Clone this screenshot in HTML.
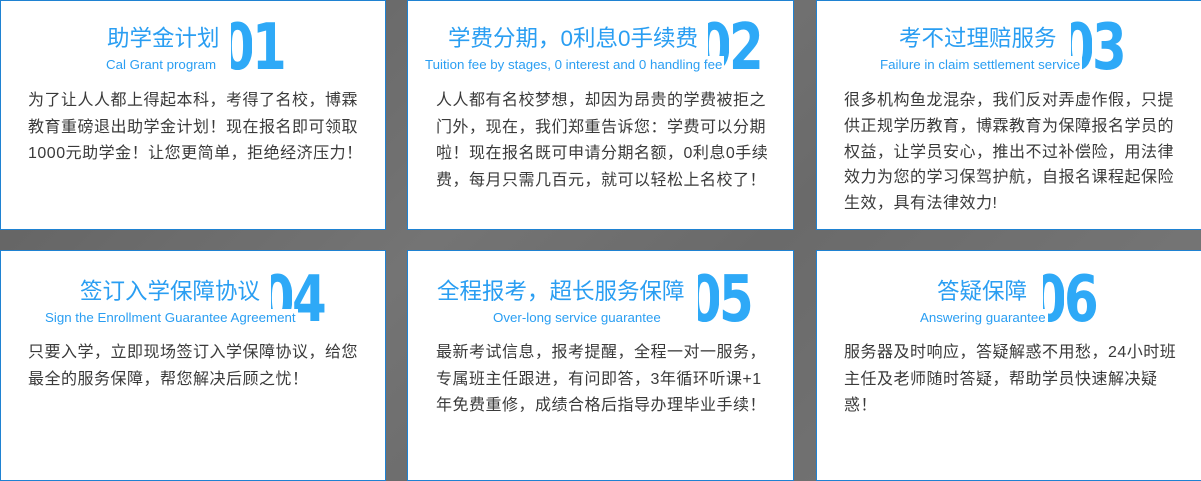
<!DOCTYPE html>
<html><head><meta charset="utf-8"><style>
*{margin:0;padding:0;box-sizing:border-box}
body{width:1201px;height:480px;overflow:hidden;position:relative;background:linear-gradient(135deg,#5e5e5e 0%,#747474 40%,#6a6a6a 60%,#7a7a7a 100%);font-family:"Liberation Sans","Noto Sans CJK SC",sans-serif}
.c{position:absolute;background:#fff;border:1px solid #1f82d2;overflow:hidden}
.t{position:absolute;top:23px;font-size:22.5px;color:#2a9ef2;white-space:nowrap;z-index:2;line-height:30px}
.s{position:absolute;top:55px;font-size:13.3px;color:#2a9ef2;white-space:nowrap;z-index:2;line-height:18px;background:#fff;padding-right:2px}
.n{position:absolute;top:11px;font-family:"DejaVu Sans",sans-serif;font-weight:bold;font-size:64px;color:#2ea9f7;white-space:nowrap;line-height:72px;z-index:1;transform:scaleX(.78);transform-origin:left top}
.n .z{display:inline-block;width:27px;overflow:hidden;vertical-align:top}
.n .z span{display:inline-block;margin-left:-14px}
.b{position:absolute;top:87px;font-size:16px;color:#3a3a3a;line-height:26.5px;white-space:nowrap;letter-spacing:.5px;z-index:2}
</style></head><body>
<div class="c" style="left:0;top:0;width:386px;height:230px">
<div class="t" style="left:106px">助学金计划</div>
<div class="s" style="left:105px">Cal Grant program</div>
<div class="n" style="left:230px"><span class="z"><span>0</span></span>1</div>
<div class="b" style="left:27px">为了让人人都上得起本科，考得了名校，博霖<br>教育重磅退出助学金计划！现在报名即可领取<br>1000元助学金！让您更简单，拒绝经济压力！</div>
</div>
<div class="c" style="left:407px;top:0;width:387px;height:230px">
<div class="t" style="left:40px">学费分期，0利息0手续费</div>
<div class="s" style="left:17px">Tuition fee by stages, 0 interest and 0 handling fee</div>
<div class="n" style="left:300px"><span class="z"><span>0</span></span>2</div>
<div class="b" style="left:28px">人人都有名校梦想，却因为昂贵的学费被拒之<br>门外，现在，我们郑重告诉您：学费可以分期<br>啦！现在报名既可申请分期名额，0利息0手续<br>费，每月只需几百元，就可以轻松上名校了！</div>
</div>
<div class="c" style="left:816px;top:0;width:386px;height:230px">
<div class="t" style="left:82px">考不过理赔服务</div>
<div class="s" style="left:63px">Failure in claim settlement service</div>
<div class="n" style="left:254px"><span class="z"><span>0</span></span>3</div>
<div class="b" style="left:27px;line-height:25.8px">很多机构鱼龙混杂，我们反对弄虚作假，只提<br>供正规学历教育，博霖教育为保障报名学员的<br>权益，让学员安心，推出不过补偿险，用法律<br>效力为您的学习保驾护航，自报名课程起保险<br>生效，具有法律效力!</div>
</div>
<div class="c" style="left:0;top:250px;width:386px;height:231px">
<div class="t" style="left:79px;top:26px">签订入学保障协议</div>
<div class="s" style="left:44px;top:58px">Sign the Enrollment Guarantee Agreement</div>
<div class="n" style="left:270px;top:13px"><span class="z"><span>0</span></span>4</div>
<div class="b" style="left:27px;top:89px">只要入学，立即现场签订入学保障协议，给您<br>最全的服务保障，帮您解决后顾之忧！</div>
</div>
<div class="c" style="left:407px;top:250px;width:387px;height:231px">
<div class="t" style="left:29px;top:26px">全程报考，超长服务保障</div>
<div class="s" style="left:85px;top:58px">Over-long service guarantee</div>
<div class="n" style="left:290px;top:13px"><span class="z"><span>0</span></span>5</div>
<div class="b" style="left:28px;top:89px">最新考试信息，报考提醒，全程一对一服务，<br>专属班主任跟进，有问即答，3年循环听课+1<br>年免费重修，成绩合格后指导办理毕业手续！</div>
</div>
<div class="c" style="left:816px;top:250px;width:386px;height:231px">
<div class="t" style="left:120px;top:26px">答疑保障</div>
<div class="s" style="left:103px;top:58px">Answering guarantee</div>
<div class="n" style="left:226px;top:13px"><span class="z"><span>0</span></span>6</div>
<div class="b" style="left:27px;top:89px">服务器及时响应，答疑解惑不用愁，24小时班<br>主任及老师随时答疑，帮助学员快速解决疑<br>惑！</div>
</div>
</body></html>
